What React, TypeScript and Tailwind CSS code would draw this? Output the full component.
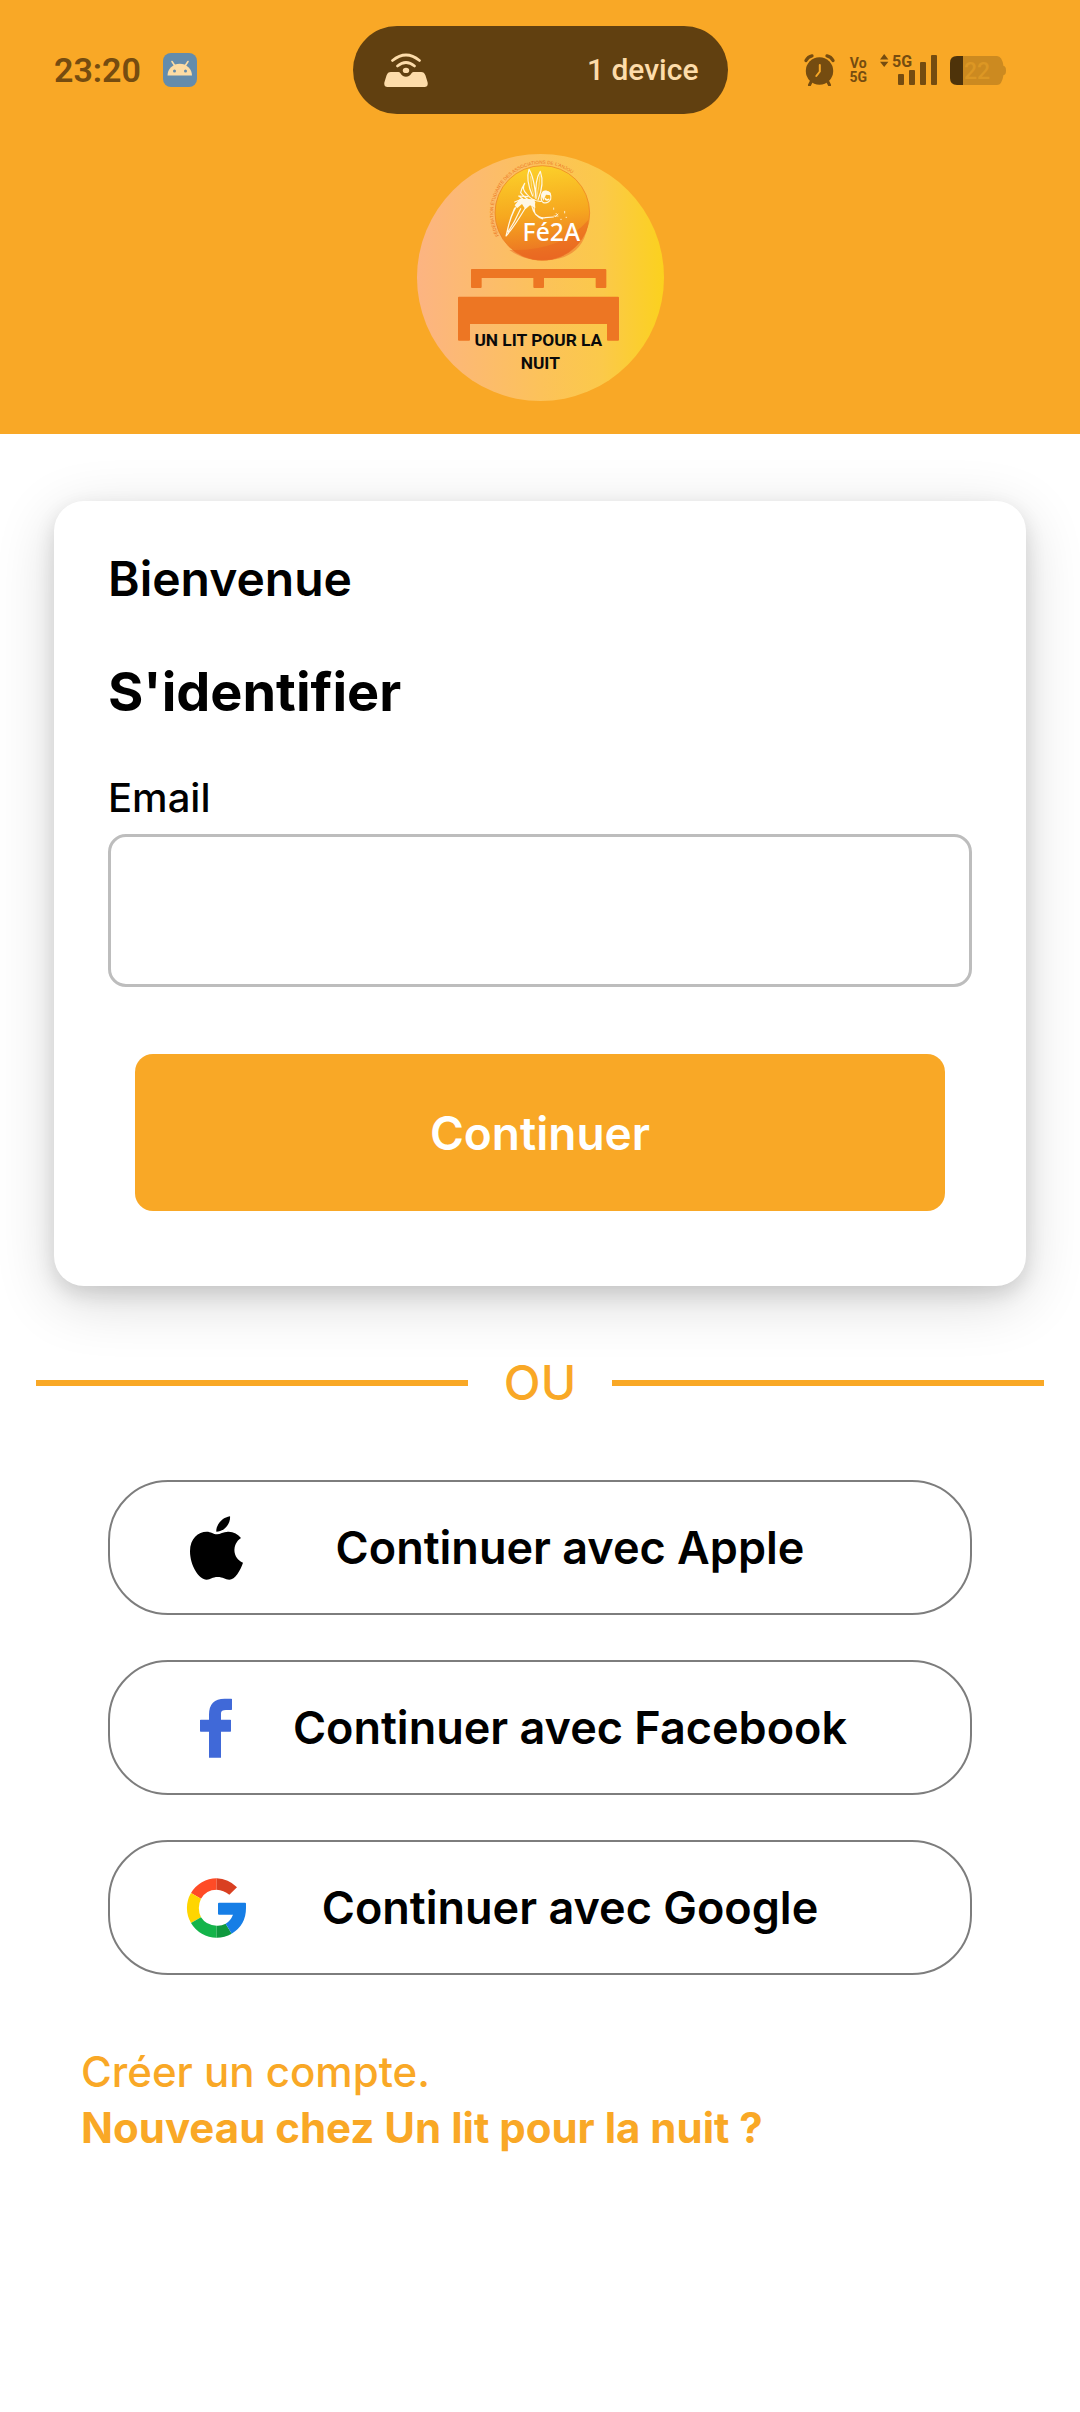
import type { ReactNode } from "react";

function AndroidIcon() {
  return (
    <svg viewBox="0 0 34 34" className="size-[34px]" aria-hidden="true">
      <rect width="34" height="34" rx="8" fill="#648cac" />
      <path d="M4.500 22.500a12 11.500 0 0 1 24.500 0z" fill="#fcdca4" />
      <path d="M9 8.500l3 4.500M25 8.500l-3 4.500" stroke="#fcdca4" strokeWidth="1.600" strokeLinecap="round" />
      <circle cx="11.500" cy="18" r="1.500" fill="#648cac" />
      <circle cx="22.500" cy="18" r="1.500" fill="#648cac" />
    </svg>
  );
}

function HotspotIcon() {
  return (
    <svg viewBox="0 0 44 34" className="h-[34px] w-[44px]" fill="none" aria-hidden="true">
      <path
        d="M7 19h7.500c2.500 0 2.500 4.800 7.500 4.800s5-4.800 7.500-4.800H37c2.500 0 3.500 1 4.500 3.500l2 6.500c.8 3-.5 5-3 5h-37c-2.500 0-3.800-2-3-5l2-6.500C3.500 20 4.500 19 7 19z"
        fill="#fddcaa"
      />
      <ellipse cx="22" cy="17.400" rx="3.200" ry="2.600" fill="#fddcaa" />
      <path d="M8.500 7.500q13.500-11 27 0M13.500 13q8.500-7 17 0" stroke="#fddcaa" strokeWidth="2.700" strokeLinecap="round" />
    </svg>
  );
}

function AlarmIcon() {
  return (
    <svg viewBox="0 0 32 32" className="size-8" aria-hidden="true">
      <g stroke="#754c10" strokeLinecap="round">
        <path d="M7 28l-1.500 3M24 28l1.500 3" strokeWidth="3" />
        <path d="M2 6.500Q4 2.500 8 1.800M29 6.500Q27 2.500 23 1.800" strokeWidth="3.200" />
      </g>
      <circle cx="15.500" cy="17" r="13.700" fill="#754c10" />
      <path d="M15.800 11v6.500l-3.500 4.500" fill="none" stroke="#f9a826" strokeWidth="2" strokeLinecap="round" />
    </svg>
  );
}

function SignalIcon() {
  return (
    <svg viewBox="0 -4 57 40" className="h-10 w-[57px]" fill="#754c10" aria-label="Signal 5G">
      <path d="M0 5.500L4.200 0l4.200 5.500zM0 7.800h8.400L4.200 13z" />
      <text x="12" y="13" fontSize="16" fontWeight="700" fontFamily="Roboto, sans-serif">
        5G
      </text>
      <rect x="18" y="20" width="6" height="11" rx="1" />
      <rect x="29" y="16" width="6" height="15" rx="1" />
      <rect x="40" y="8" width="6" height="23" rx="1" />
      <rect x="51" y="1" width="6" height="30" rx="1" />
    </svg>
  );
}

function BatteryIcon() {
  return (
    <svg viewBox="0 0 56 29" className="h-[29px] w-[56px]" aria-label="Batterie 22 %">
      <path d="M13 0h34q5 0 6.500 10 2.500 0 2.500 4.500t-2.500 4.500Q52 29 47 29H13z" fill="#cc8a20" />
      <path d="M13 0v29H7q-7 0-7-7V7q0-7 7-7z" fill="#4e330a" />
      <text x="14" y="23" fontSize="23" fontWeight="500" fontFamily="Roboto, sans-serif" fill="#dc9724">
        22
      </text>
    </svg>
  );
}

function StatusBar() {
  return (
    <div className="grid grid-cols-[1fr_375px_1fr] items-center px-[54px] text-[#754c10]">
      <div className="flex items-center gap-[22px]">
        <span className="font-[Roboto,sans-serif] text-[34px] leading-10 font-semibold">23:20</span>
        <AndroidIcon />
      </div>
      <div className="flex h-[88px] items-center justify-between rounded-full bg-[#614010] pr-[29px] pl-[31px] text-[#fddcaa]">
        <HotspotIcon />
        <span className="font-[Roboto,sans-serif] text-[30px] leading-10 font-medium">1 device</span>
      </div>
      <div className="flex items-center justify-end gap-[13px] pr-5">
        <AlarmIcon />
        <span className="text-center font-[Roboto,sans-serif] text-[14px] leading-[14px] font-bold">
          Vo
          <br />
          5G
        </span>
        <SignalIcon />
        <BatteryIcon />
      </div>
    </div>
  );
}

function Logo() {
  return (
    <svg viewBox="51 42 741 741" className="mx-auto size-[247px]" role="img" aria-label="Un lit pour la nuit">
      <defs>
        <linearGradient id="disc" x1="0" x2="1">
          <stop offset="0" stopColor="#fcb482" />
          <stop offset="0.500" stopColor="#fcc25a" />
          <stop offset="0.750" stopColor="#fbc94a" />
          <stop offset="1" stopColor="#fbd11e" />
        </linearGradient>
        <linearGradient id="ball" x1="0.450" y1="0" x2="0.550" y2="1">
          <stop offset="0" stopColor="#fcd02a" />
          <stop offset="0.500" stopColor="#f6a81f" />
          <stop offset="1" stopColor="#ea6a24" />
        </linearGradient>
        <path id="ring" d="M297 287A147 147 0 1 1 574 219" />
      </defs>
      <circle cx="421.500" cy="412.500" r="370.500" fill="url(#disc)" />
      <circle cx="427" cy="219" r="142" fill="url(#ball)" stroke="#ec7a22" strokeWidth="2" />
      <path d="M328 330Q480 336 565 240Q556 362 427 361Q370 361 328 330z" fill="#e96222" opacity="0.450" />
      <text fontSize="14" fontFamily="'Liberation Sans', sans-serif" fill="#ec7623">
        <textPath href="#ring">FÉDÉRATION ÉTUDIANTE DES ASSOCIATIONS DE L'ANJOU</textPath>
      </text>
      <g fill="none" stroke="#fff8e6" strokeWidth="3.500" strokeLinecap="round" strokeLinejoin="round">
        <path d="M398 168Q376 120 387 88Q402 110 408 176M408 176Q404 120 421 94Q434 130 414 180" />
        <path d="M392 110Q392 140 403 172M420 108Q418 140 410 172" strokeWidth="1.500" />
        <path d="M424 170Q426 152 440 154Q456 160 452 178Q444 192 430 188Q422 182 424 170z" />
        <path d="M436 176Q440 182 446 178" strokeWidth="5" />
        <path d="M424 184Q400 186 380 162Q364 146 374 130Q364 146 362 158Q376 178 404 188" />
        <path d="M404 188Q400 210 406 222Q420 236 436 233L460 231M396 200Q402 228 428 237" />
        <path d="M344 186L368 176L356 168L384 170M350 198Q330 230 318 288Q340 264 376 204M344 204Q326 244 322 276M362 206Q344 246 324 276" />
        <path d="M461 204v4M494 214v5M468 220l4 4M474 222l-8 8M462 228h12M498 232h2M482 238h2" strokeWidth="2.500" />
      </g>
      <path d="M344 196L360 176L404 178L406 204L390 196L376 208L366 192L352 204z" fill="#fff8e6" />
      <path d="M424 166Q424 150 440 152Q456 156 452 166L438 164L430 182z" fill="#fff8e6" />
      <text x="454" y="302" fontSize="74" textAnchor="middle" fontFamily="'Noto Sans', sans-serif" fontWeight="500" fill="#ffffff">
        Fé2A
      </text>
      <g fill="#ed7623">
        <path d="M215 387h401q3 0 3 3v51q0 3-3 3h-26q-3 0-3-3v-27H432v27q0 3-3 3h-26q-3 0-3-3v-27H245v27q0 3-3 3h-26q-3 0-3-3v-51q0-3 2-3z" />
        <path d="M177 470h477q3 0 3 3v126q0 3-3 3h-30q-3 0-3-3v-47H210v47q0 3-3 3h-30q-3 0-3-3V473q0-3 3-3z" />
      </g>
      <g fontSize="52" fontWeight="700" fontFamily="Roboto, 'Liberation Sans', sans-serif" fill="#0a0a0a" textAnchor="middle">
        <text x="415" y="617">UN LIT POUR LA</text>
        <text x="421" y="687">NUIT</text>
      </g>
    </svg>
  );
}

function AppleIcon() {
  return (
    <svg viewBox="18 22 180 180" className="size-[60px] shrink-0 overflow-visible" aria-hidden="true">
      <path d="M150 17C152 38 134 63 109 63C107 43 127 20 150 17z" />
      <path d="M80 63C93 63 100 71 111 71C121 71 131 62 146 63C161 64 174 70 183 82C155 100 157 143 189 156C181 179 165 207 148 207C135 207 129 199 113 199C97 199 92 207 80 207C57 207 30 165 30 122C30 83 55 63 80 63z" />
    </svg>
  );
}

function FacebookIcon() {
  return (
    <svg viewBox="258 172 180 180" className="size-[60px] shrink-0" aria-hidden="true">
      <path
        d="M327 351V273H302q-2 0-2-2V239q0-2 2-2H327V222Q327 174 374 174H394q2 0 2 2V206q0 2-2 2H378Q363 208 363 217V237H391q2 0 2 2V271q0 2-2 2H363V351z"
        fill="#4069d8"
      />
    </svg>
  );
}

function GoogleIcon() {
  return (
    <svg viewBox="258 712 180 180" className="size-[60px] shrink-0" aria-hidden="true">
      <path d="M350 713A89 89 0 0 0 273 757L303 774A54 54 0 0 1 350 747z" fill="#ff4b26" />
      <path d="M350 713Q385 714 411 740L388 762Q371 748 350 747z" fill="#d93f21" />
      <path d="M273 757A89 89 0 0 0 273 847L303 830Q290 802 303 774z" fill="#ffd500" />
      <path d="M273 847A89 89 0 0 0 350 891V855Q319 855 303 830z" fill="#14b44a" />
      <path d="M350 891Q374 891 395 879L377 849Q364 856 350 855z" fill="#0f993e" />
      <path d="M357 786H435q3 0 3 3V802Q438 853 395 879L377 849Q392 840 399 822H357q-3 0-3-3V789q0-3 3-3z" fill="#167ee6" />
    </svg>
  );
}

function SocialButton({ icon, label }: { icon: ReactNode; label: string }) {
  return (
    <button
      type="button"
      className="flex h-[135px] w-full items-center rounded-[60px] border-2 border-[#7d7d7d] bg-white px-[76px] text-[45px] leading-[60px] font-semibold"
    >
      {icon}
      <span className="flex-1 text-center">{label}</span>
    </button>
  );
}

export default function App() {
  return (
    <div className="min-h-screen bg-white font-[Inter,'Liberation_Sans',sans-serif] text-black">
      <header className="bg-[#f9a826] pt-[26px] pb-[33px]">
        <StatusBar />
        <div className="mt-10">
          <Logo />
        </div>
      </header>

      <main>
        <form
          className="mx-[54px] mt-[67px] rounded-[30px] bg-white px-[54px] pt-12 pb-[75px] shadow-[0_15px_60px_rgba(0,0,0,0.16),0_8px_20px_rgba(0,0,0,0.12)]"
          onSubmit={(event) => event.preventDefault()}
        >
          <p className="text-[48px] leading-[60px] font-semibold">Bienvenue</p>
          <h1 className="mt-[50px] text-[54px] leading-[66px] font-bold">S'identifier</h1>
          <label htmlFor="email" className="mt-12 block text-[40px] leading-[50px] font-medium">
            Email
          </label>
          <input
            id="email"
            type="email"
            className="mt-[11px] block h-[153px] w-full rounded-[18px] border-3 border-[#bdbdbd] px-6 text-[40px]"
          />
          <div className="mt-[67px] px-[27px]">
            <button
              type="submit"
              className="block h-[157px] w-full rounded-[18px] bg-[#f9a826] text-[46px] leading-[60px] font-semibold text-white"
            >
              Continuer
            </button>
          </div>
        </form>

        <div className="mx-9 mt-[67px] flex items-center text-[#f9a826]">
          <div className="h-[6px] flex-1 bg-[#f9a826]" />
          <span className="w-36 text-center text-[48px] leading-[60px] font-medium">OU</span>
          <div className="h-[6px] flex-1 bg-[#f9a826]" />
        </div>

        <div className="mx-[108px] mt-[67px] flex flex-col gap-[45px]">
          <SocialButton icon={<AppleIcon />} label="Continuer avec Apple" />
          <SocialButton icon={<FacebookIcon />} label="Continuer avec Facebook" />
          <SocialButton icon={<GoogleIcon />} label="Continuer avec Google" />
        </div>

        <a href="#inscription" className="mx-[81px] mt-[69px] block text-[42px] leading-14 text-[#f9a826]">
          <span className="block font-medium">Créer un compte.</span>
          <span className="block font-bold">Nouveau chez Un lit pour la nuit ?</span>
        </a>
      </main>
    </div>
  );
}
